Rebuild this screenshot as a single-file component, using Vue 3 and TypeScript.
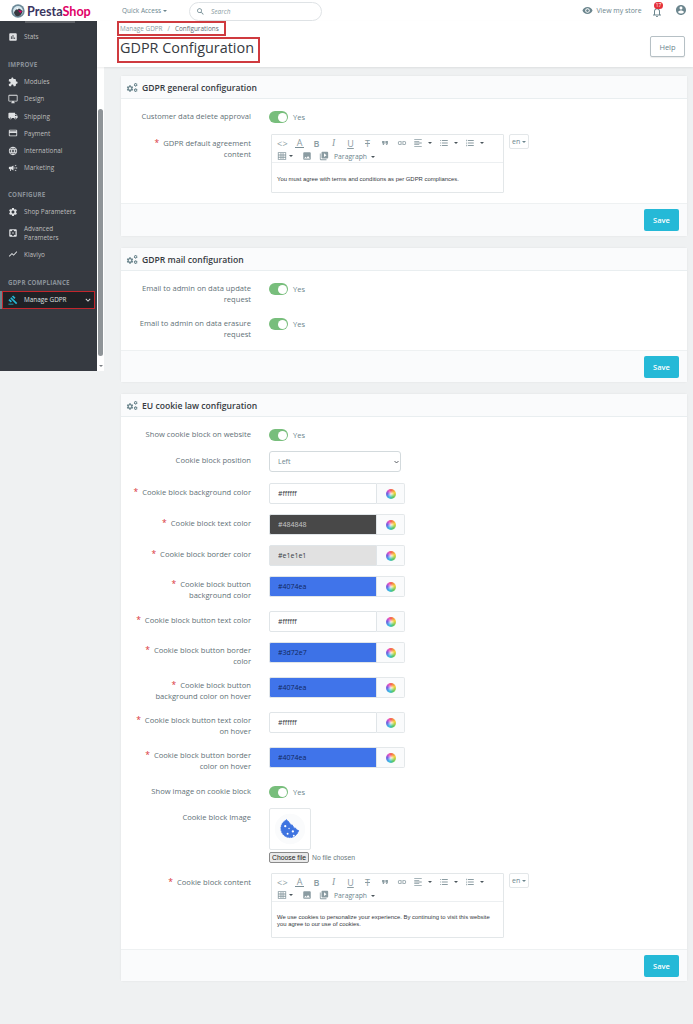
<script setup lang="ts">
const P: Record<string, string> = {
  puzzle: 'M20.5 11H19V7c0-1.1-.9-2-2-2h-4V3.5C13 2.12 11.88 1 10.5 1S8 2.12 8 3.5V5H4c-1.1 0-1.99.9-1.99 2v3.8H3.5c1.49 0 2.7 1.21 2.7 2.7s-1.21 2.7-2.7 2.7H2V20c0 1.1.9 2 2 2h3.8v-1.5c0-1.49 1.21-2.7 2.7-2.7 1.49 0 2.7 1.21 2.7 2.7V22H17c1.1 0 2-.9 2-2v-4h1.5c1.38 0 2.5-1.12 2.5-2.5S21.88 11 20.5 11z',
  desktop: 'M21 2H3c-1.1 0-2 .9-2 2v12c0 1.1.9 2 2 2h7v2H8v2h8v-2h-2v-2h7c1.1 0 2-.9 2-2V4c0-1.1-.9-2-2-2zm0 14H3V4h18v12z',
  truck: 'M20 8h-3V4H3c-1.1 0-2 .9-2 2v11h2c0 1.66 1.34 3 3 3s3-1.34 3-3h6c0 1.66 1.34 3 3 3s3-1.34 3-3h2v-5l-3-4zM6 18.5c-.83 0-1.5-.67-1.5-1.5s.67-1.5 1.5-1.5 1.5.67 1.5 1.5-.67 1.5-1.5 1.5zm13.5-9l1.96 2.5H17V9.5h2.5zm-1.5 9c-.83 0-1.5-.67-1.5-1.5s.67-1.5 1.5-1.5 1.5.67 1.5 1.5-.67 1.5-1.5 1.5z',
  card: 'M20 4H4c-1.11 0-1.99.89-1.99 2L2 18c0 1.11.89 2 2 2h16c1.11 0 2-.89 2-2V6c0-1.11-.89-2-2-2zm0 14H4v-6h16v6zm0-10H4V6h16v2z',
  globe: 'M11.99 2C6.47 2 2 6.48 2 12s4.47 10 9.99 10C17.52 22 22 17.52 22 12S17.52 2 11.99 2zm6.93 6h-2.95c-.32-1.25-.78-2.45-1.38-3.56 1.84.63 3.37 1.91 4.33 3.56zM12 4.04c.83 1.2 1.48 2.53 1.91 3.96h-3.82c.43-1.43 1.08-2.76 1.91-3.96zM4.26 14C4.1 13.36 4 12.69 4 12s.1-1.36.26-2h3.38c-.08.66-.14 1.32-.14 2 0 .68.06 1.34.14 2H4.26zm.82 2h2.95c.32 1.25.78 2.45 1.38 3.56-1.84-.63-3.37-1.9-4.33-3.56zm2.95-8H5.08c.96-1.66 2.49-2.93 4.33-3.56C8.81 5.55 8.35 6.75 8.03 8zM12 19.96c-.83-1.2-1.48-2.53-1.91-3.96h3.82c-.43 1.43-1.08 2.76-1.91 3.96zM14.34 14H9.66c-.09-.66-.16-1.32-.16-2 0-.68.07-1.35.16-2h4.68c.09.65.16 1.32.16 2 0 .68-.07 1.34-.16 2zm.25 5.56c.6-1.11 1.06-2.31 1.38-3.56h2.95c-.96 1.65-2.49 2.93-4.33 3.56zM16.36 14c.08-.66.14-1.32.14-2 0-.68-.06-1.34-.14-2h3.38c.16.64.26 1.31.26 2s-.1 1.36-.26 2h-3.38z',
  mega: 'M18 11v2h4v-2h-4zm-2 6.61c.96.71 2.21 1.65 3.2 2.39.4-.53.8-1.07 1.2-1.6-.99-.74-2.24-1.68-3.2-2.4-.4.54-.8 1.08-1.2 1.61zM20.4 5.6c-.4-.53-.8-1.07-1.2-1.6-.99.74-2.24 1.68-3.2 2.4.4.53.8 1.07 1.2 1.6.96-.72 2.21-1.65 3.2-2.4zM4 9c-1.1 0-2 .9-2 2v2c0 1.1.9 2 2 2h1v4h2v-4h1l5 3V6L8 9H4zm11.5 3c0-1.33-.58-2.53-1.5-3.35v6.69c.92-.81 1.5-2.01 1.5-3.34z',
  gear: 'M19.14 12.94c.04-.3.06-.61.06-.94 0-.32-.02-.64-.07-.94l2.03-1.58c.18-.14.23-.41.12-.61l-1.92-3.32c-.12-.22-.37-.29-.59-.22l-2.39.96c-.5-.38-1.03-.7-1.62-.94l-.36-2.54c-.04-.24-.24-.41-.48-.41h-3.84c-.24 0-.43.17-.47.41l-.36 2.54c-.59.24-1.13.57-1.62.94l-2.39-.96c-.22-.08-.47 0-.59.22L2.74 8.87c-.12.21-.08.47.12.61l2.03 1.58c-.05.3-.09.63-.09.94s.02.64.07.94l-2.03 1.58c-.18.14-.23.41-.12.61l1.92 3.32c.12.22.37.29.59.22l2.39-.96c.5.38 1.03.7 1.62.94l.36 2.54c.05.24.24.41.48.41h3.84c.24 0 .44-.17.47-.41l.36-2.54c.59-.24 1.13-.56 1.62-.94l2.39.96c.22.08.47 0 .59-.22l1.92-3.32c.12-.22.07-.47-.12-.61l-2.01-1.58zM12 15.6c-1.98 0-3.6-1.62-3.6-3.6s1.62-3.6 3.6-3.6 3.6 1.62 3.6 3.6-1.62 3.6-3.6 3.6z',
  chart: 'M3.5 18.49l6-6.01 4 4L22 6.92l-1.41-1.41-7.09 7.97-4-4L2 16.99z',
  gavel: 'M1 21h12v2H1zM5.245 8.07l2.83-2.827 14.14 14.142-2.828 2.828zM12.317 1l5.657 5.656-2.83 2.83-5.654-5.66zM3.825 9.485l5.657 5.657-2.828 2.828-5.657-5.657z',
  stats: 'M19 3H5c-1.1 0-2 .9-2 2v14c0 1.1.9 2 2 2h14c1.1 0 2-.9 2-2V5c0-1.1-.9-2-2-2zM9 17H7v-7h2v7zm4 0h-2V7h2v10zm4 0h-2v-4h2v4z',
  adv: 'M12 10c-1.1 0-2 .9-2 2s.9 2 2 2 2-.9 2-2-.9-2-2-2zm7-7H5c-1.11 0-2 .9-2 2v14c0 1.1.89 2 2 2h14c1.11 0 2-.9 2-2V5c0-1.1-.89-2-2-2zm-1.75 9c0 .23-.02.46-.05.68l1.48 1.16c.13.11.17.3.08.45l-1.4 2.42c-.09.15-.27.21-.43.15l-1.74-.7c-.36.28-.76.51-1.18.69l-.26 1.85c-.03.17-.18.3-.35.3h-2.8c-.17 0-.32-.13-.35-.29l-.26-1.85c-.43-.18-.82-.41-1.18-.69l-1.74.7c-.16.06-.34 0-.43-.15l-1.4-2.42c-.09-.15-.05-.34.08-.45l1.48-1.16c-.03-.23-.05-.46-.05-.69 0-.23.02-.46.05-.68l-1.48-1.16c-.13-.11-.17-.3-.08-.45l1.4-2.42c.09-.15.27-.21.43-.15l1.74.7c.36-.28.76-.51 1.18-.69l.26-1.85c.03-.17.18-.3.35-.3h2.8c.17 0 .32.13.35.29l.26 1.85c.43.18.82.41 1.18.69l1.74-.7c.16-.06.34 0 .43.15l1.4 2.42c.09.15.05.34-.08.45l-1.48 1.16c.03.23.05.46.05.69z',
  eye: 'M12 4.5C7 4.5 2.73 7.61 1 12c1.73 4.39 6 7.5 11 7.5s9.27-3.11 11-7.5c-1.73-4.39-6-7.5-11-7.5zM12 17c-2.76 0-5-2.24-5-5s2.24-5 5-5 5 2.24 5 5-2.24 5-5 5zm0-8c-1.66 0-3 1.34-3 3s1.34 3 3 3 3-1.34 3-3-1.34-3-3-3z',
  user: 'M12 2C6.48 2 2 6.48 2 12s4.48 10 10 10 10-4.48 10-10S17.52 2 12 2zm0 3c1.66 0 3 1.34 3 3s-1.34 3-3 3-3-1.34-3-3 1.34-3 3-3zm0 14.2c-2.5 0-4.71-1.28-6-3.22.03-1.99 4-3.08 6-3.08 1.99 0 5.97 1.09 6 3.08-1.29 1.94-3.5 3.22-6 3.22z',
  bell: 'M12 22c1.1 0 2-.9 2-2h-4c0 1.1.89 2 2 2zm6-6v-5c0-3.07-1.64-5.64-4.5-6.32V4c0-.83-.67-1.5-1.5-1.5s-1.5.67-1.5 1.5v.68C7.63 5.36 6 7.92 6 11v5l-2 2v1h16v-1l-2-2zm-2 1H8v-6c0-2.48 1.51-4.5 4-4.5s4 2.02 4 4.5v6z',
  search: 'M15.5 14h-.79l-.28-.27C15.41 12.59 16 11.11 16 9.5 16 5.91 13.09 3 9.5 3S3 5.91 3 9.5 5.91 16 9.5 16c1.61 0 3.09-.59 4.23-1.57l.27.28v.79l5 4.99L20.49 19l-4.99-5zm-6 0C7.01 14 5 11.99 5 9.5S7.01 5 9.5 5 14 7.01 14 9.5 11.99 14 9.5 14z',
  down: 'M7.41 8.59L12 13.17l4.59-4.58L18 10l-6 6-6-6 1.41-1.41z',
  link: 'M3.9 12c0-1.71 1.39-3.1 3.1-3.1h4V7H7c-2.76 0-5 2.24-5 5s2.24 5 5 5h4v-1.9H7c-1.71 0-3.1-1.39-3.1-3.1zM8 13h8v-2H8v2zm9-6h-4v1.9h4c1.71 0 3.1 1.39 3.1 3.1s-1.39 3.1-3.1 3.1h-4V17h4c2.76 0 5-2.24 5-5s-2.24-5-5-5z',
  image: 'M21 19V5c0-1.1-.9-2-2-2H5c-1.1 0-2 .9-2 2v14c0 1.1.9 2 2 2h14c1.1 0 2-.9 2-2zM8.5 13.5l2.5 3.01L14.5 12l4.5 6H5l3.5-4.5z',
  media: 'M4 6H2v14c0 1.1.9 2 2 2h14v-2H4V6zm16-4H8c-1.1 0-2 .9-2 2v12c0 1.1.9 2 2 2h12c1.1 0 2-.9 2-2V4c0-1.1-.9-2-2-2zm-8 12.5v-9l6 4.5-6 4.5z',
  align: 'M3 3h18v2H3zM3 7h12v2H3zM3 11h18v2H3zM3 15h12v2H3zM3 19h18v2H3z',
  list: 'M3 5h2v2H3zM7 5h14v2H7zM3 11h2v2H3zM7 11h14v2H7zM3 17h2v2H3zM7 17h14v2H7z',
  numlist: 'M3 4h2v4H3zM7 5h14v2H7zM3 10.5h2v3H3zM7 11h14v2H7zM3 16h2v4H3zM7 17h14v2H7z',
  table: 'M2 3h20v18H2zM4 5v3.5h4.5V5zm6.5 0v3.5h3V5zm5 0v3.5H20V5zM4 10.5V14h4.5v-3.5zm6.5 0V14h3v-3.5zm5 0V14H20v-3.5zM4 16v3h4.5v-3zm6.5 0v3h3v-3zm5 0v3H20v-3z',
  quote: 'M6 17h3l2-4V7H5v6h3zm8 0h3l2-4V7h-6v6h3z'
}

interface NavItem { label: string[]; icon: string; active?: boolean }
interface NavGroup { title?: string; items: NavItem[] }

const nav: NavGroup[] = [
  { items: [
    { label: ['Stats'], icon: 'stats' }
  ] },
  { title: 'IMPROVE', items: [
    { label: ['Modules'], icon: 'puzzle' },
    { label: ['Design'], icon: 'desktop' },
    { label: ['Shipping'], icon: 'truck' },
    { label: ['Payment'], icon: 'card' },
    { label: ['International'], icon: 'globe' },
    { label: ['Marketing'], icon: 'mega' }
  ] },
  { title: 'CONFIGURE', items: [
    { label: ['Shop Parameters'], icon: 'gear' },
    { label: ['Advanced', 'Parameters'], icon: 'adv' },
    { label: ['Klaviyo'], icon: 'chart' }
  ] },
  { title: 'GDPR COMPLIANCE', items: [
    { label: ['Manage GDPR'], icon: 'gavel', active: true }
  ] }
]

interface ColorRow { label: string[]; value: string; bg: string; fg: string }
const colors: ColorRow[] = [
  { label: ['Cookie block background color'], value: '#ffffff', bg: '#ffffff', fg: '#363a41' },
  { label: ['Cookie block text color'], value: '#484848', bg: '#484848', fg: '#c9c9c9' },
  { label: ['Cookie block border color'], value: '#e1e1e1', bg: '#e1e1e1', fg: '#363a41' },
  { label: ['Cookie block button', 'background color'], value: '#4074ea', bg: '#4074ea', fg: '#12285c' },
  { label: ['Cookie block button text color'], value: '#ffffff', bg: '#ffffff', fg: '#363a41' },
  { label: ['Cookie block button border', 'color'], value: '#3d72e7', bg: '#3d72e7', fg: '#12285c' },
  { label: ['Cookie block button', 'background color on hover'], value: '#4074ea', bg: '#4074ea', fg: '#12285c' },
  { label: ['Cookie block button text color', 'on hover'], value: '#ffffff', bg: '#ffffff', fg: '#363a41' },
  { label: ['Cookie block button border', 'color on hover'], value: '#4074ea', bg: '#4074ea', fg: '#12285c' }
]

const row1 = [
  { k: 'code', w: 17 }, { k: 'A', w: 17 }, { k: 'B', w: 17 }, { k: 'I', w: 17 },
  { k: 'U', w: 17 }, { k: 'S', w: 17 }, { k: 'quote', w: 17 }, { k: 'link', w: 17 },
  { k: 'align', w: 26 }, { k: 'list', w: 26 }, { k: 'numlist', w: 26 }
]
const editors = {
  agreement: ['You must agree with terms and conditions as per GDPR compliances.'],
  cookie: ['We use cookies to personalize your experience. By continuing to visit this website', 'you agree to our use of cookies.']
}
</script>

<template>
  <div class="page">
    <header class="top">
      <div class="logo">
        <svg class="logo-mark" viewBox="0 0 24 24">
          <circle cx="12" cy="12" r="11.500" fill="#6d8a99" />
          <circle cx="12" cy="12" r="8.500" fill="#d5e7ee" />
          <path d="M5 15c2-6 7-8 11-6l4 3c-1 6-5 9-9 9-3 0-5-3-6-6z" fill="#363a41" />
          <path d="M12 10.500l7 1.500-3 4z" fill="#df0067" />
          <circle cx="11" cy="8" r="1.500" fill="#fff" />
        </svg>
        <span class="logo-text">Presta<b>Shop</b></span>
      </div>
      <div class="quick">Quick Access <i class="caret"></i></div>
      <div class="search">
        <svg viewBox="0 0 24 24"><path :d="P.search" /></svg>
        <em>Search</em>
      </div>
      <div class="top-right">
        <svg class="eye" viewBox="0 0 24 24"><path :d="P.eye" /></svg>
        <span class="store">View my store</span>
        <span class="bell">
          <svg viewBox="0 0 24 24"><path :d="P.bell" /></svg>
          <span class="badge">17</span>
        </span>
        <svg class="user" viewBox="0 0 24 24"><path :d="P.user" /></svg>
      </div>
    </header>

    <div class="shell">
      <div class="side-wrap">
        <nav class="side">
          <div class="cut-row"></div>
          <section v-for="(g, gi) in nav" :key="gi" class="group">
            <h4 v-if="g.title">{{ g.title }}</h4>
            <div
              v-for="it in g.items"
              :key="it.label[0]"
              class="nav-item"
              :class="{ active: it.active, tall: it.label.length > 1 }"
            >
              <svg class="nav-ico" viewBox="0 0 24 24"><path :d="P[it.icon]" /></svg>
              <span class="nav-label"><span v-for="l in it.label" :key="l">{{ l }}</span></span>
              <svg v-if="it.active" class="nav-chev" viewBox="0 0 24 24"><path :d="P.down" /></svg>
            </div>
          </section>
        </nav>
        <div class="scroll">
          <i class="arrow up"></i>
          <div class="thumb"></div>
          <i class="arrow dn"></i>
        </div>
      </div>

      <main class="main">
        <div class="toolbar">
          <div class="heads">
            <div class="crumbs"><span class="c1">Manage GDPR</span><span class="sep">/</span><span class="c2">Configurations</span></div>
            <h1>GDPR Configuration</h1>
          </div>
          <button class="help">Help</button>
        </div>

        <div class="cards">
          <section class="card">
            <div class="card-head">
              <svg class="gears" viewBox="0 0 36 30"><path :d="P.gear" transform="translate(0 6)" /><path :d="P.gear" transform="translate(22 0) scale(.58)" /><path :d="P.gear" transform="translate(22 16) scale(.58)" /></svg>
              GDPR general configuration
            </div>
            <div class="card-body">
              <div class="row mb11">
                <label class="flush"><span>Customer data delete approval</span></label>
                <div class="toggle-wrap"><span class="toggle"></span><span class="yes">Yes</span></div>
              </div>
              <div class="row mb10">
                <label class="ed-label"><span><b class="star">*</b>GDPR default agreement</span><span>content</span></label>
                <div class="ed-wrap">
                  <div class="editor h59">
                    <div class="tb">
                      <div class="tb-row">
                        <span v-for="b in row1" :key="b.k" class="tb-btn" :class="{ split: b.w === 26 }">
                          <template v-if="b.k === 'code'"><span class="g code">&lt;&gt;</span></template>
                          <template v-else-if="b.k === 'A'"><span class="g under">A</span></template>
                          <template v-else-if="b.k === 'B'"><span class="g bold">B</span></template>
                          <template v-else-if="b.k === 'I'"><span class="g ital">I</span></template>
                          <template v-else-if="b.k === 'U'"><span class="g u">U</span></template>
                          <template v-else-if="b.k === 'S'"><span class="g s">T</span></template>
                          <svg v-else viewBox="0 0 24 24"><path :d="P[b.k]" /></svg>
                          <i v-if="b.w === 26" class="caret"></i>
                        </span>
                      </div>
                      <div class="tb-row">
                        <span class="tb-btn table"><svg viewBox="0 0 24 24"><path fill-rule="evenodd" :d="P.table" /></svg><i class="caret"></i></span>
                        <span class="tb-btn"><svg viewBox="0 0 24 24"><path :d="P.image" /></svg></span>
                        <span class="tb-btn"><svg viewBox="0 0 24 24"><path :d="P.media" /></svg></span>
                        <span class="para">Paragraph <i class="caret"></i></span>
                      </div>
                    </div>
                    <div class="ed-text"><p v-for="l in editors.agreement" :key="l">{{ l }}</p></div>
                  </div>
                  <div class="lang">en <i class="caret"></i></div>
                </div>
              </div>
            </div>
            <div class="card-foot foot33"><button class="save">Save</button></div>
          </section>

          <section class="card">
            <div class="card-head">
              <svg class="gears" viewBox="0 0 36 30"><path :d="P.gear" transform="translate(0 6)" /><path :d="P.gear" transform="translate(22 0) scale(.58)" /><path :d="P.gear" transform="translate(22 16) scale(.58)" /></svg>
              GDPR mail configuration
            </div>
            <div class="card-body">
              <div class="row mb13">
                <label class="flush"><span>Email to admin on data update</span><span>request</span></label>
                <div class="toggle-wrap"><span class="toggle"></span><span class="yes">Yes</span></div>
              </div>
              <div class="row mb10">
                <label class="flush"><span>Email to admin on data erasure</span><span>request</span></label>
                <div class="toggle-wrap"><span class="toggle"></span><span class="yes">Yes</span></div>
              </div>
            </div>
            <div class="card-foot"><button class="save">Save</button></div>
          </section>

          <section class="card">
            <div class="card-head">
              <svg class="gears" viewBox="0 0 36 30"><path :d="P.gear" transform="translate(0 6)" /><path :d="P.gear" transform="translate(22 0) scale(.58)" /><path :d="P.gear" transform="translate(22 16) scale(.58)" /></svg>
              EU cookie law configuration
            </div>
            <div class="card-body">
              <div class="row mb10">
                <label class="flush"><span>Show cookie block on website</span></label>
                <div class="toggle-wrap"><span class="toggle"></span><span class="yes">Yes</span></div>
              </div>
              <div class="row mb11">
                <label><span>Cookie block position</span></label>
                <div class="sel-wrap">
                  <select class="sel"><option>Left</option></select>
                  <svg viewBox="0 0 10 6"><path d="M1 1l4 4 4-4" fill="none" stroke="#363a41" stroke-width="1.600" /></svg>
                </div>
              </div>
              <div v-for="c in colors" :key="c.label.join()" class="row mb10">
                <label :class="{ two: c.label.length > 1 }">
                  <span v-for="(l, i) in c.label" :key="l"><b v-if="i === 0" class="star">*</b>{{ l }}</span>
                </label>
                <div class="color">
                  <input class="color-in" :value="c.value" :style="{ background: c.bg, color: c.fg }" readonly />
                  <span class="color-add"><i class="wheel"></i></span>
                </div>
              </div>
              <div class="row mb10 push4">
                <label class="flush"><span>Show image on cookie block</span></label>
                <div class="toggle-wrap"><span class="toggle"></span><span class="yes">Yes</span></div>
              </div>
              <div class="row mb10">
                <label class="ed-label"><span>Cookie block Image</span></label>
                <div>
                  <div class="thumb-box">
                    <svg viewBox="0 0 42 42">
                      <circle cx="21" cy="21" r="16" fill="#fafbfc" />
                      <path d="M17.500 11.500c1 .6 1.800 1.800 2.800 2.600.8 2.200 2.700 3 3.800 3.200 0 1.700 1.500 3 3 3 .4 1.300 1.500 2 2.900 2.200-1 4.300-4.800 7.500-9 7.500-5.300 0-9.500-4.200-9.500-9.500 0-4.400 2.800-8 6-9z" fill="#3f74e0" stroke="#3f74e0" stroke-width="1" stroke-dasharray="1 1.500" stroke-linecap="round" />
                      <circle cx="16" cy="18" r="1.200" fill="#fff" /><circle cx="24" cy="23.500" r="1.200" fill="#fff" /><circle cx="18.500" cy="26" r="1" fill="#fff" /><circle cx="25" cy="28" r="1" fill="#fff" /><circle cx="20" cy="20.500" r=".7" fill="#fff" />
                    </svg>
                  </div>
                  <div class="file"><button class="choose">Choose file</button><span>No file chosen</span></div>
                </div>
              </div>
              <div class="row mb11">
                <label class="ed-label"><span><b class="star">*</b>Cookie block content</span></label>
                <div class="ed-wrap">
                  <div class="editor h65">
                    <div class="tb tb-lg">
                      <div class="tb-row">
                        <span v-for="b in row1" :key="b.k" class="tb-btn" :class="{ split: b.w === 26 }">
                          <template v-if="b.k === 'code'"><span class="g code">&lt;&gt;</span></template>
                          <template v-else-if="b.k === 'A'"><span class="g under">A</span></template>
                          <template v-else-if="b.k === 'B'"><span class="g bold">B</span></template>
                          <template v-else-if="b.k === 'I'"><span class="g ital">I</span></template>
                          <template v-else-if="b.k === 'U'"><span class="g u">U</span></template>
                          <template v-else-if="b.k === 'S'"><span class="g s">T</span></template>
                          <svg v-else viewBox="0 0 24 24"><path :d="P[b.k]" /></svg>
                          <i v-if="b.w === 26" class="caret"></i>
                        </span>
                      </div>
                      <div class="tb-row">
                        <span class="tb-btn table"><svg viewBox="0 0 24 24"><path fill-rule="evenodd" :d="P.table" /></svg><i class="caret"></i></span>
                        <span class="tb-btn"><svg viewBox="0 0 24 24"><path :d="P.image" /></svg></span>
                        <span class="tb-btn"><svg viewBox="0 0 24 24"><path :d="P.media" /></svg></span>
                        <span class="para">Paragraph <i class="caret"></i></span>
                      </div>
                    </div>
                    <div class="ed-text lg"><p v-for="l in editors.cookie" :key="l">{{ l }}</p></div>
                  </div>
                  <div class="lang">en <i class="caret"></i></div>
                </div>
              </div>
            </div>
            <div class="card-foot"><button class="save">Save</button></div>
          </section>
        </div>
      </main>
    </div>
  </div>
</template>

<style>
html, body { margin: 0; background: #eff1f2; }
</style>

<style scoped>
* { box-sizing: border-box; }
.page { width: 693px; min-height: 1024px; font-family: "Open Sans", "Liberation Sans", sans-serif; color: #6c868e; background: #eff1f2; }

/* top bar */
.top { height: 21px; background: #fff; display: flex; align-items: center; position: relative; }
.logo { width: 122px; display: flex; align-items: center; padding-left: 11px; margin-top: 1px; }
.logo-mark { width: 14px; height: 14px; flex: none; }
.logo-text { margin-left: 2px; font-family: Lato, "Open Sans", sans-serif; font-size: 12.600px; font-weight: 700; color: #3a3560; }
.logo-text b { font-weight: 700; color: #df0067; }
.quick { width: 67px; font-size: 6.500px; color: #6c868e; white-space: nowrap; }
.caret { display: inline-block; width: 0; height: 0; border-left: 2.300px solid transparent; border-right: 2.300px solid transparent; border-top: 2.600px solid currentColor; vertical-align: middle; }
.search { width: 133px; height: 19px; margin-top: 2px; border: 1px solid #dfe3e6; border-radius: 10px; display: flex; align-items: center; padding-left: 6px; }
.search svg { width: 9px; height: 9px; fill: #6c868e; }
.search em { margin-left: 6px; font-size: 6.500px; color: #8a9ba1; }
.top-right { margin-left: auto; display: flex; align-items: center; color: #6c868e; }
.eye { width: 11px; height: 11px; fill: #6c868e; margin-right: 4px; margin-top: -1px; }
.store { font-size: 6.900px; width: 54.500px; white-space: nowrap; margin-top: -1px; }
.bell { position: relative; width: 12px; height: 14px; display: block; margin-top: 1px; }
.bell svg { width: 12px; height: 12px; fill: #6c868e; position: absolute; left: 0; top: 2px; }
.badge { position: absolute; left: 3px; top: -2px; width: 9px; height: 7px; border-radius: 4px; background: #e5303a; color: #fff; font-size: 5px; line-height: 7px; text-align: center; }
.user { width: 12px; height: 12px; fill: #6c868e; margin: -1px 6px 0 12px; }

/* shell */
.shell { display: flex; align-items: flex-start; }
.side-wrap { width: 104px; height: 350px; display: flex; background: #fff; flex: none; }
.side { width: 97px; height: 350px; background: #363a41; overflow: hidden; }
.cut-row { width: 50px; height: 1.500px; margin: 0 0 5.500px 25px; background: rgba(190,190,190,.3); }
.group { margin-bottom: 10px; }
.group:first-of-type { margin-bottom: 11px; }
.group:nth-of-type(3) { margin-bottom: 11px; }
.group h4 { margin: 0; height: 17px; padding-left: 8px; font-size: 6.200px; line-height: 17px; font-weight: 700; color: #8a9199; letter-spacing: .15px; white-space: nowrap; }
.nav-item { height: 17.200px; display: flex; align-items: center; padding-left: 8px; color: #bebebe; font-size: 6.400px; position: relative; }
.nav-item.tall { height: 25px; }
.nav-item.active { height: 18px; background: #1f2125; color: #dfe0e1; margin: 0 2px; padding-left: 6px; outline: 1.500px solid #c1272d; outline-offset: -1px; }
.nav-item.active::before { content: ""; position: absolute; left: -2px; top: 0; bottom: 0; width: 2px; background: #6c868e; }
.nav-ico { width: 10px; height: 10px; fill: #dfe1e3; flex: none; }
.active .nav-ico { fill: #25b9d7; }
.nav-label { margin-left: 6px; display: flex; flex-direction: column; line-height: 9px; white-space: nowrap; }
.nav-chev { width: 10px; height: 10px; fill: #dfe1e3; margin-left: auto; margin-right: 2px; }
.scroll { width: 7px; position: relative; display: flex; flex-direction: column; align-items: center; }
.thumb { position: absolute; left: 1px; top: 88px; width: 4.500px; height: 247px; border-radius: 3px; background: #8f9498; }
.arrow { position: absolute; left: 2px; width: 0; height: 0; border-left: 2px solid transparent; border-right: 2px solid transparent; }
.arrow.up { top: 3px; border-bottom: 2.500px solid #7a7f83; }
.arrow.dn { bottom: 4px; border-top: 2.500px solid #7a7f83; }

/* main */
.main { flex: 1; min-width: 0; }
.toolbar { height: 46px; margin-left: -7px; padding-left: 20px; padding-right: 8px; background: #fff; display: flex; justify-content: space-between; box-shadow: 0 1px 2px rgba(0,0,0,.08); position: relative; }
.heads { display: flex; flex-direction: column; }
.crumbs { height: 15px; width: 109px; border: 2px solid #cf3a3f; padding-left: 1px; font-size: 6.400px; line-height: 12px; white-space: nowrap; }
.c1 { color: #8a9ba1; }
.sep { margin: 0 5px; color: #8a9ba1; }
.c2 { color: #5b6b72; }
h1 { margin: 1px 0 0; width: 143px; height: 26px; border: 2px solid #cf3a3f; padding-left: 1px; font-size: 14.400px; line-height: 18px; font-weight: 400; color: #363a41; white-space: nowrap; }
.help { margin-top: 15px; width: 35px; height: 21px; background: #fff; border: 1px solid #b6c0c5; border-radius: 2px; color: #6c868e; font: 400 7.500px "Open Sans", sans-serif; box-shadow: 0 1px 1px rgba(0,0,0,.08); padding: 0; }
.cards { padding: 9px 6px 0 17px; display: flex; flex-direction: column; gap: 12px; }
.card { background: #fff; box-shadow: 0 0 2px rgba(0,0,0,.08); border-radius: 2px; }
.card-head { height: 23px; display: flex; align-items: center; padding: 1px 0 0 5px; background: #fafbfc; border-bottom: 1px solid #e9eef0; font-size: 8.600px; font-weight: 600; color: #363a41; }
.gears { width: 12px; height: 11px; fill: #6c868e; margin-right: 4px; }
.card-body { padding-top: 12px; }
.card-foot { height: 32px; display: flex; justify-content: flex-end; padding: 5px 8px 0 0; background: #fafbfc; border-top: 1px solid #eef1f2; }
.foot33 { height: 33px; }
.save { width: 35px; height: 22px; background: #25b9d7; border: 0; border-radius: 2px; color: #fff; font: 600 7.500px "Open Sans", sans-serif; padding: 0; }

.row { display: grid; grid-template-columns: 130px 1fr; column-gap: 18px; }
.mb10 { margin-bottom: 10px; } .mb11 { margin-bottom: 11px; } .mb13 { margin-bottom: 13px; }
.push4 { margin-top: 14px; }
label { display: flex; flex-direction: column; align-items: flex-end; padding-top: 4px; font-size: 7.600px; line-height: 11px; color: #5f7177; white-space: nowrap; }
label.flush { padding-top: 0; }
label.ed-label { padding-top: 4px; }
label.two { padding-top: 3px; }
.star { color: #d9343a; font-weight: 400; margin-right: 4px; font-size: 8.500px; line-height: 8px; }
.toggle-wrap { display: flex; align-items: center; height: 12px; }
.toggle { display: block; width: 19px; height: 12px; border-radius: 6px; background: #78be7c; position: relative; }
.toggle::after { content: ""; position: absolute; right: 1.500px; top: 1.500px; width: 9px; height: 9px; border-radius: 50%; background: #fff; }
.yes { margin-left: 5px; font-size: 7.500px; color: #6c868e; }
.sel-wrap { position: relative; width: 132px; height: 21px; }
.sel-wrap svg { position: absolute; right: 2.500px; top: 8.500px; width: 5px; height: 4px; pointer-events: none; }
.sel { display: block; width: 132px; height: 21px; background: #fff; border: 1px solid #d3dadd; border-radius: 3px; font: 7px "Open Sans", sans-serif; color: #6c868e; padding-left: 8px; appearance: none; outline: 0; }
.color { display: flex; height: 21px; width: 136px; }
.color-in { width: 108px; height: 21px; border: 1px solid #e0e5e8; border-radius: 2px 0 0 2px; padding: 0 0 0 8px; font: 7px "Open Sans", sans-serif; outline: 0; }
.color-add { flex: 1; display: flex; align-items: center; justify-content: center; background: #fafbfc; border: 1px solid #e4e8ea; border-left: 0; border-radius: 0 2px 2px 0; }
.wheel { width: 10px; height: 10px; border-radius: 50%; display: block; background: radial-gradient(circle, rgba(255,255,255,.85) 0, rgba(255,255,255,0) 3.500px), conic-gradient(#f5604f 0deg, #f5d33b 70deg, #55c96a 150deg, #3bb9e8 210deg, #7a5be0 280deg, #f056c0 330deg, #f5604f 360deg); }

.ed-wrap { display: flex; align-items: flex-start; padding-left: 2px; }
.editor { width: 233px; border: 1px solid #e3e7e9; border-radius: 1px; background: #fff; display: flex; flex-direction: column; }
.h59 { height: 59px; } .h65 { height: 65px; }
.tb { height: 28px; background: #fff; border-bottom: 1px solid #eceff1; padding: 1.500px 0 0 2px; flex: none; color: #6c868e; }
.tb-row { display: flex; height: 13px; align-items: center; }
.tb-btn { width: 17px; height: 13px; display: flex; align-items: center; justify-content: center; flex: none; }
.tb-btn svg { width: 10px; height: 10px; fill: #8b9ca2; flex: none; }
.tb-btn.split { width: 26px; justify-content: flex-start; padding-left: 3px; gap: 5px; }
.tb-btn.split .caret { color: #4a555b; }
.tb-btn.table { width: 24px; justify-content: flex-start; padding-left: 3px; gap: 2px; }
.tb-btn.table .caret { color: #4a555b; }
.g { font-size: 9px; line-height: 10px; color: #8b9ca2; }
.g.code { font: 9px "Open Sans", sans-serif; letter-spacing: .4px; }
.g.under { font: 9px "Open Sans", sans-serif; border-bottom: 1px solid #7a8e95; padding: 0 2px; line-height: 9.500px; }
.g.bold { font: 600 9px "Open Sans", sans-serif; }
.g.ital { font: italic 400 9.500px "Liberation Serif", serif; }
.g.u { font: 9px "Open Sans", sans-serif; text-decoration: underline; }
.g.s { font: 9px "Open Sans", sans-serif; text-decoration: line-through; }
.para { margin-left: 2px; font-size: 6.800px; color: #6c868e; white-space: nowrap; }
.para .caret { color: #4a555b; margin-left: 2px; }
.ed-text { padding: 13px 0 0 5px; font: 5.900px/7px "Liberation Sans", sans-serif; color: #363a41; }
.ed-text.lg { padding-top: 12px; }
.ed-text p { margin: 0; white-space: nowrap; }
.lang { margin-left: 5px; width: 20px; height: 15px; border: 1px solid #e3e7e9; border-radius: 2px; font-size: 7px; line-height: 13px; text-align: center; color: #6c868e; }
.lang .caret { color: #6c868e; }
.thumb-box { width: 42px; height: 42px; border: 1px solid #e3e7e9; border-radius: 2px; background: #fff; }
.thumb-box svg { display: block; width: 40px; height: 40px; }
.file { margin-top: 2px; height: 11px; display: flex; align-items: center; font: 6.800px "Liberation Sans", sans-serif; color: #6c7a80; white-space: nowrap; }
.choose { width: 40px; height: 11px; padding: 0; background: #e9e9e9; border: 1px solid #8a8a8a; border-radius: 2px; font: 6.800px/9px "Liberation Sans", sans-serif; color: #222; margin-right: 3px; }
</style>
